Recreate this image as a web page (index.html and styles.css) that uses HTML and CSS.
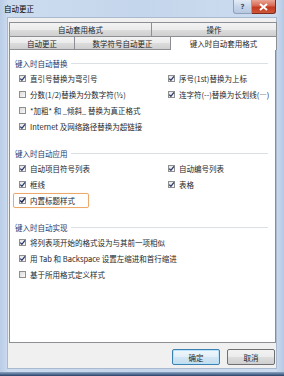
FILE: index.html
```html
<!DOCTYPE html>
<html lang="zh-CN">
<head>
<meta charset="utf-8">
<title>自动更正</title>
<link rel="stylesheet" href="styles.css">
</head>
<body>
<div class="window">
  <div class="titlebar">
    <span class="title">自动更正</span>
    <div class="caption-btns">
      <span class="cap help">?</span>
      <span class="cap close">
        <svg width="9" height="8" viewBox="0 0 9 8"><path d="M1 1 L8 7 M8 1 L1 7" stroke="#fff" stroke-width="2" fill="none"/></svg>
      </span>
    </div>
  </div>
  <div class="client">
    <div class="tabs">
      <div class="tabrow row1">
        <span class="tab t-fmt">自动套用格式</span>
        <span class="tab t-act">操作</span>
      </div>
      <div class="tabrow row2">
        <span class="tab t-ac">自动更正</span>
        <span class="tab t-math">数学符号自动更正</span>
        <span class="tab t-sel">键入时自动套用格式</span>
      </div>
    </div>
    <div class="panel">
      <div class="section">
        <div class="heading"><span>键入时自动替换</span></div>
        <div class="grid">
          <label class="item"><span class="cb on"><svg viewBox="0 0 7 7"><path d="M1.2 3.6 L2.9 5.3 L6 1.3" fill="none" stroke="#2b3a6b" stroke-width="1.3"/></svg></span>直引号替换为弯引号</label>
          <label class="item"><span class="cb on"><svg viewBox="0 0 7 7"><path d="M1.2 3.6 L2.9 5.3 L6 1.3" fill="none" stroke="#2b3a6b" stroke-width="1.3"/></svg></span>序号(1st)替换为上标</label>
          <label class="item"><span class="cb"></span>分数(1/2)替换为分数字符(½)</label>
          <label class="item"><span class="cb on"><svg viewBox="0 0 7 7"><path d="M1.2 3.6 L2.9 5.3 L6 1.3" fill="none" stroke="#2b3a6b" stroke-width="1.3"/></svg></span>连字符(--)替换为长划线(—)</label>
          <label class="item wide"><span class="cb"></span>*加粗* 和 _倾斜_ 替换为真正格式</label>
          <label class="item wide"><span class="cb on"><svg viewBox="0 0 7 7"><path d="M1.2 3.6 L2.9 5.3 L6 1.3" fill="none" stroke="#2b3a6b" stroke-width="1.3"/></svg></span>Internet 及网络路径替换为超链接</label>
        </div>
      </div>
      <div class="section">
        <div class="heading"><span>键入时自动应用</span></div>
        <div class="grid">
          <label class="item"><span class="cb on"><svg viewBox="0 0 7 7"><path d="M1.2 3.6 L2.9 5.3 L6 1.3" fill="none" stroke="#2b3a6b" stroke-width="1.3"/></svg></span>自动项目符号列表</label>
          <label class="item"><span class="cb on"><svg viewBox="0 0 7 7"><path d="M1.2 3.6 L2.9 5.3 L6 1.3" fill="none" stroke="#2b3a6b" stroke-width="1.3"/></svg></span>自动编号列表</label>
          <label class="item"><span class="cb on"><svg viewBox="0 0 7 7"><path d="M1.2 3.6 L2.9 5.3 L6 1.3" fill="none" stroke="#2b3a6b" stroke-width="1.3"/></svg></span>框线</label>
          <label class="item"><span class="cb on"><svg viewBox="0 0 7 7"><path d="M1.2 3.6 L2.9 5.3 L6 1.3" fill="none" stroke="#2b3a6b" stroke-width="1.3"/></svg></span>表格</label>
          <label class="item wide"><span class="focus"><span class="cb on"><svg viewBox="0 0 7 7"><path d="M1.2 3.6 L2.9 5.3 L6 1.3" fill="none" stroke="#1a2550" stroke-width="1.4"/></svg></span>内置标题样式</span></label>
        </div>
      </div>
      <div class="section">
        <div class="heading"><span>键入时自动实现</span></div>
        <div class="grid">
          <label class="item wide"><span class="cb on"><svg viewBox="0 0 7 7"><path d="M1.2 3.6 L2.9 5.3 L6 1.3" fill="none" stroke="#2b3a6b" stroke-width="1.3"/></svg></span>将列表项开始的格式设为与其前一项相似</label>
          <label class="item wide"><span class="cb on"><svg viewBox="0 0 7 7"><path d="M1.2 3.6 L2.9 5.3 L6 1.3" fill="none" stroke="#2b3a6b" stroke-width="1.3"/></svg></span>用 Tab 和 Backspace 设置左缩进和首行缩进</label>
          <label class="item wide"><span class="cb"></span>基于所用格式定义样式</label>
        </div>
      </div>
    </div>
    <div class="buttons">
      <span class="btn default">确定</span>
      <span class="btn">取消</span>
    </div>
  </div>
  <div class="bottom-edge"></div>
</div>
</body>
</html>
```

FILE: styles.css
```css
html, body {
  margin: 0;
  padding: 0;
}
body {
  width: 284px;
  height: 376px;
  overflow: hidden;
  font-family: "Noto Sans CJK SC", "Noto Sans", sans-serif;
  font-size: 7.5px;
  color: #262626;
}
.window {
  width: 284px;
  height: 376px;
  background: linear-gradient(90deg, #b9cde6 0%, #cddcef 3%, #c4d6ec 50%, #cddcef 97%, #b5c9e3 100%);
  display: flex;
  flex-direction: column;
}
.titlebar {
  height: 17px;
  display: flex;
  align-items: center;
  justify-content: space-between;
  padding-left: 4px;
  padding-right: 8px;
  position: relative;
}
.title {
  font-size: 7.5px;
  color: #000;
  line-height: 10px;
  margin-top: 1px;
}
.caption-btns {
  display: flex;
  align-self: flex-start;
}
.cap {
  height: 14px;
  display: flex;
  align-items: center;
  justify-content: center;
  box-sizing: border-box;
}
.help {
  width: 19px;
  background: linear-gradient(#e3ebf5, #c7d6ea 50%, #b7c8df);
  border: 1px solid #8ea2bd;
  border-top: none;
  border-radius: 0 0 0 3px;
  font-family: "DejaVu Sans", sans-serif;
  font-size: 7px;
  font-weight: bold;
  color: #3d4f6b;
}
.close {
  width: 24px;
  background: linear-gradient(#eaa595, #d66852 45%, #c2391e 55%, #d0573a);
  border: 1px solid #7c2c1e;
  border-top: none;
  border-left: none;
  border-radius: 0 0 3px 0;
}
.client {
  margin: 0 7px;
  height: 352px;
  background: #f0f0f0;
  border: 1px solid #a9b9cf;
  box-sizing: border-box;
  padding: 4px 0 0 1px;
  display: flex;
  flex-direction: column;
}
.tabs {
  width: 268px;
}
.tabrow {
  display: flex;
}
.tab {
  box-sizing: border-box;
  display: flex;
  align-items: center;
  justify-content: center;
  background: linear-gradient(#f3f3f3, #ebebeb 50%, #dddddd 51%, #cfcfcf);
  border: 1px solid #8d8f95;
  border-bottom: none;
  color: #262626;
  white-space: nowrap;
}
.row1 .tab { height: 14px; }
.row2 .tab { height: 13px; }
.t-fmt { width: 143px; }
.t-act { width: 125px; border-left: none; }
.t-ac { width: 66px; }
.t-math { width: 96px; border-left: none; }
.t-sel {
  width: 106px;
  border-left: none;
  background: #fff;
  height: 14px !important;
  margin-bottom: -1px;
  position: relative;
  z-index: 1;
}
.panel {
  width: 267px;
  height: 294px;
  box-sizing: border-box;
  background: #fff;
  border: 1px solid #8d8f95;
  padding-top: 8px;
}
.section + .section {
  margin-top: 14px;
}
.heading {
  display: flex;
  align-items: center;
  height: 10px;
  padding-left: 5px;
  padding-right: 7px;
  color: #1e3a70;
}
.heading::after {
  content: "";
  flex: 1;
  border-top: 1px solid #dcdfe4;
  margin-left: 3px;
}
.grid {
  display: grid;
  grid-template-columns: 149px 1fr;
  grid-auto-rows: 16px;
  padding-left: 9px;
  margin-top: 2px;
}
.item {
  display: flex;
  align-items: center;
  white-space: nowrap;
}
.wide {
  grid-column: 1 / span 2;
}
.cb {
  width: 7px;
  height: 7px;
  box-sizing: border-box;
  border: 1px solid #8f8f8f;
  background: linear-gradient(135deg, #dcdcdc, #f8f8f8);
  margin-right: 4px;
  flex: none;
  display: flex;
}
.cb.on {
  background: linear-gradient(135deg, #e4e4e4, #fbfbfb);
}
.cb svg {
  width: 7px;
  height: 7px;
  margin: -1px;
}
.focus {
  display: flex;
  align-items: center;
  height: 15px;
  box-sizing: border-box;
  width: 76px;
  margin-left: -6px;
  padding-left: 5px;
  border: 1px solid #eba96b;
  border-radius: 2px;
  box-shadow: 0 0 1px #f8d7b5;
}
.buttons {
  display: flex;
  justify-content: flex-end;
  gap: 7px;
  padding-right: 1px;
  margin-top: 6px;
}
.btn {
  width: 48px;
  height: 16px;
  box-sizing: border-box;
  display: flex;
  align-items: center;
  justify-content: center;
  border: 1px solid #707070;
  border-radius: 2px;
  background: linear-gradient(#f2f2f2, #ebebeb 50%, #dddddd 51%, #cfcfcf);
  color: #262626;
}
.btn.default {
  border-color: #3c7fb1;
  box-shadow: inset 0 0 0 1px #b8e2f8;
  background: linear-gradient(#eef6fb, #e2eff8 50%, #d2e6f4 51%, #c4dcee);
}
.bottom-edge {
  margin-top: auto;
  height: 4px;
  background: linear-gradient(#8ea6c4, #27406a);
}
```
